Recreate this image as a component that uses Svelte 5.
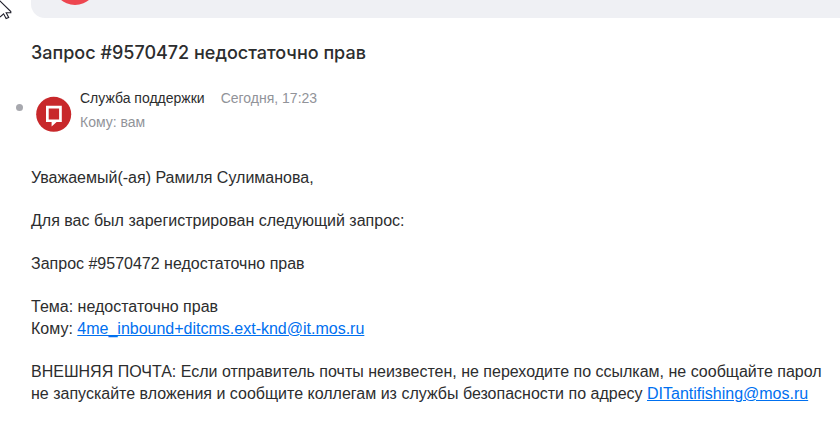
<script>
  const subject = 'Запрос #9570472 недостаточно прав';
</script>

<main class="mail">
  <div class="previous">
    <svg class="previous-avatar" viewBox="0 0 44 44" aria-hidden="true">
      <circle cx="22" cy="22" r="22" fill="#ed4650" />
    </svg>
  </div>

  <svg class="cursor" viewBox="0 0 12 20" aria-hidden="true">
    <path d="M-1.5-.5 10.8 11.5V12.8H6.2L8.7 17.4 6.1 18.6 3.6 13.8 0 17" fill="#fff" stroke="#1f1f2b" stroke-width="1.1" />
  </svg>

  <h1>{subject}</h1>

  <header class="sender">
    <span class="dot"></span>
    <svg class="avatar" viewBox="0 0 36 36" aria-hidden="true">
      <circle cx="17.7" cy="18.3" r="17.5" fill="#c8282b" />
      <path d="M10 9.7H25.8V26H20.6L15.6 30.4V26H10ZM12.7 12.4V23.4H23.1V12.4Z" fill="#fff" fill-rule="evenodd" />
    </svg>
    <div class="details">
      <div class="line">
        <span class="name">Служба поддержки</span>
        <time>Сегодня, 17:23</time>
      </div>
      <div class="to">Кому: вам</div>
    </div>
  </header>

  <article>
    <p>Уважаемый(-ая) Рамиля Сулиманова,</p>
    <p>Для вас был зарегистрирован следующий запрос:</p>
    <p>{subject}</p>
    <p>
      Тема: недостаточно прав<br />
      Кому: <a href="mailto:4me_inbound+ditcms.ext-knd@it.mos.ru">4me_inbound+ditcms.ext-knd@it.mos.ru</a>
    </p>
    <p>
      ВНЕШНЯЯ ПОЧТА: Если отправитель почты неизвестен, не переходите по ссылкам, не сообщайте парол<br />
      не запускайте вложения и сообщите коллегам из службы безопасности по адресу <a href="mailto:DITantifishing@mos.ru">DITantifishing@mos.ru</a>
    </p>
  </article>
</main>

<style>
  :global(body) {
    margin: 0;
    background: #fff;
  }

  .mail {
    position: relative;
    overflow: hidden;
    padding-bottom: 22px;
    font-family: "Liberation Sans", Arial, sans-serif;
    color: #2c2d2e;
  }

  .previous {
    height: 18px;
    margin-left: 31px;
    border-radius: 0 0 0 14px;
    background: #eff0f4;
    overflow: hidden;
    display: flex;
    align-items: flex-end;
  }

  .previous-avatar {
    flex: none;
    width: 44px;
    height: 44px;
    margin: 0 0 13px 22px;
  }

  .cursor {
    position: absolute;
    left: 0;
    top: 0;
    width: 12px;
    height: 20px;
  }

  h1 {
    margin: 22px 0 0 31px;
    font: 500 18px/26px Inter, sans-serif;
    white-space: nowrap;
  }

  .sender {
    display: flex;
    align-items: flex-start;
    margin-top: 22px;
    padding-left: 16px;
  }

  .dot {
    width: 7px;
    height: 7px;
    margin: 16px 13px 0 0;
    border-radius: 50%;
    background: #a7a8ae;
  }

  .avatar {
    width: 36px;
    height: 36px;
    margin: 8px 8px 0 0;
  }

  .details {
    font-size: 14px;
    line-height: 20px;
  }

  .line {
    display: flex;
    gap: 16px;
  }

  time,
  .to {
    color: #919399;
  }

  .to {
    margin-top: 4px;
  }

  article {
    margin: 35px 0 0 31px;
    font-size: 16px;
    line-height: 22px;
    white-space: nowrap;
  }

  p {
    margin: 0 0 21px;
  }

  a {
    color: #0070f0;
  }
</style>
